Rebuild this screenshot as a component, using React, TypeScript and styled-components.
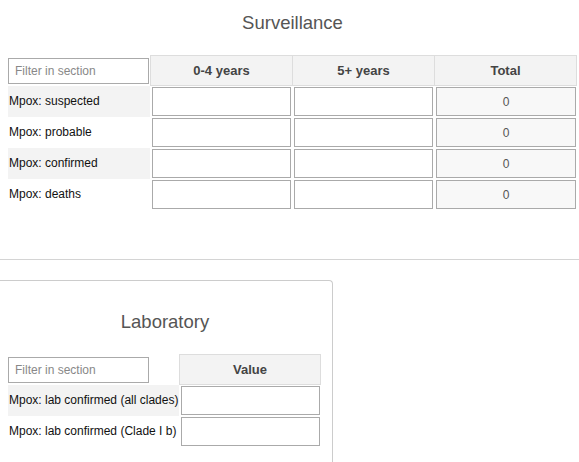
import React from "react";
import styled, { createGlobalStyle } from "styled-components";

const Global = createGlobalStyle`
  html, body { margin: 0; padding: 0; background: #fff; }
  body { font-family: "Liberation Sans", Arial, sans-serif; overflow: hidden; }
  * { box-sizing: border-box; }
`;

const Page = styled.div`
  width: 579px;
  height: 462px;
  overflow: hidden;
  display: flex;
  flex-direction: column;
  & > * { flex-shrink: 0; }
`;

const Section = styled.div`
  padding: 12px 2px 0 8px;
`;

const Title = styled.div`
  font-size: 18.5px;
  line-height: 22px;
  color: #555;
  text-align: center;
  margin-bottom: 21px;
`;

const Grid = styled.div<{ $cols: string }>`
  display: grid;
  grid-template-columns: ${(p) => p.$cols};
  grid-auto-rows: 31px;
  font-size: 12px;
`;

const FilterCell = styled.div`
  padding: 3px 0 2px 0;
  display: flex;
  align-items: stretch;
`;

const FilterInput = styled.input`
  width: 141px;
  height: 26px;
  border: 1px solid #aaa;
  padding: 0 6px;
  font-family: inherit;
  font-size: 12px;
  color: #333;
  outline: none;
  &::placeholder { color: #888; }
`;

const HeadCell = styled.div<{ $last?: boolean }>`
  background: #f3f3f3;
  border: 1px solid #ddd;
  border-right: ${(p) => (p.$last ? "1px solid #ddd" : "none")};
  display: flex;
  align-items: center;
  justify-content: center;
  font-weight: bold;
  font-size: 13px;
  color: #444;
`;

const LabelCell = styled.div<{ $shaded: boolean }>`
  background: ${(p) => (p.$shaded ? "#f3f3f3" : "#fff")};
  display: flex;
  align-items: center;
  padding-left: 1px;
  padding-bottom: 2px;
  color: #111;
  white-space: nowrap;
`;

const InputCell = styled.div`
  padding: 1px 1px 1px 2px;
  display: flex;
`;

const ValueInput = styled.input<{ $total?: boolean }>`
  width: 100%;
  height: 29px;
  border: 1px solid #aaa;
  background: ${(p) => (p.$total ? "#f8f8f8" : "#fff")};
  color: #555;
  -webkit-text-fill-color: #555;
  font-family: inherit;
  font-size: 12px;
  text-align: center;
  padding: 0;
  outline: none;
`;

const Divider = styled.div`
  margin-top: 49px;
  height: 1px;
  background: #d4d4d4;
  width: 100%;
`;

const Panel = styled.div`
  margin-top: 20px;
  margin-left: -2px;
  width: 335px;
  border: 1px solid #ccc;
  border-bottom: none;
  border-top-right-radius: 4px;
  padding: 30px 10px 40px 9px;
`;

const survRows = ["Mpox: suspected", "Mpox: probable", "Mpox: confirmed", "Mpox: deaths"];
const labRows = ["Mpox: lab confirmed (all clades)", "Mpox: lab confirmed (Clade I b)"];

export default function App() {
  return (
    <Page>
      <Global />
      <Section>
        <Title>Surveillance</Title>
        <Grid $cols="142px 142px 142px 143px">
          <FilterCell>
            <FilterInput placeholder="Filter in section" />
          </FilterCell>
          <HeadCell>0-4 years</HeadCell>
          <HeadCell>5+ years</HeadCell>
          <HeadCell $last>Total</HeadCell>
          {survRows.map((r, i) => (
            <React.Fragment key={r}>
              <LabelCell $shaded={i % 2 === 0}>{r}</LabelCell>
              <InputCell>
                <ValueInput />
              </InputCell>
              <InputCell>
                <ValueInput />
              </InputCell>
              <InputCell>
                <ValueInput $total readOnly value="0" />
              </InputCell>
            </React.Fragment>
          ))}
        </Grid>
      </Section>
      <Divider />
      <Panel>
        <Title>Laboratory</Title>
        <Grid $cols="171px 142px">
          <FilterCell>
            <FilterInput placeholder="Filter in section" />
          </FilterCell>
          <HeadCell $last>Value</HeadCell>
          {labRows.map((r, i) => (
            <React.Fragment key={r}>
              <LabelCell $shaded={i % 2 === 0}>{r}</LabelCell>
              <InputCell>
                <ValueInput />
              </InputCell>
            </React.Fragment>
          ))}
        </Grid>
      </Panel>
    </Page>
  );
}
